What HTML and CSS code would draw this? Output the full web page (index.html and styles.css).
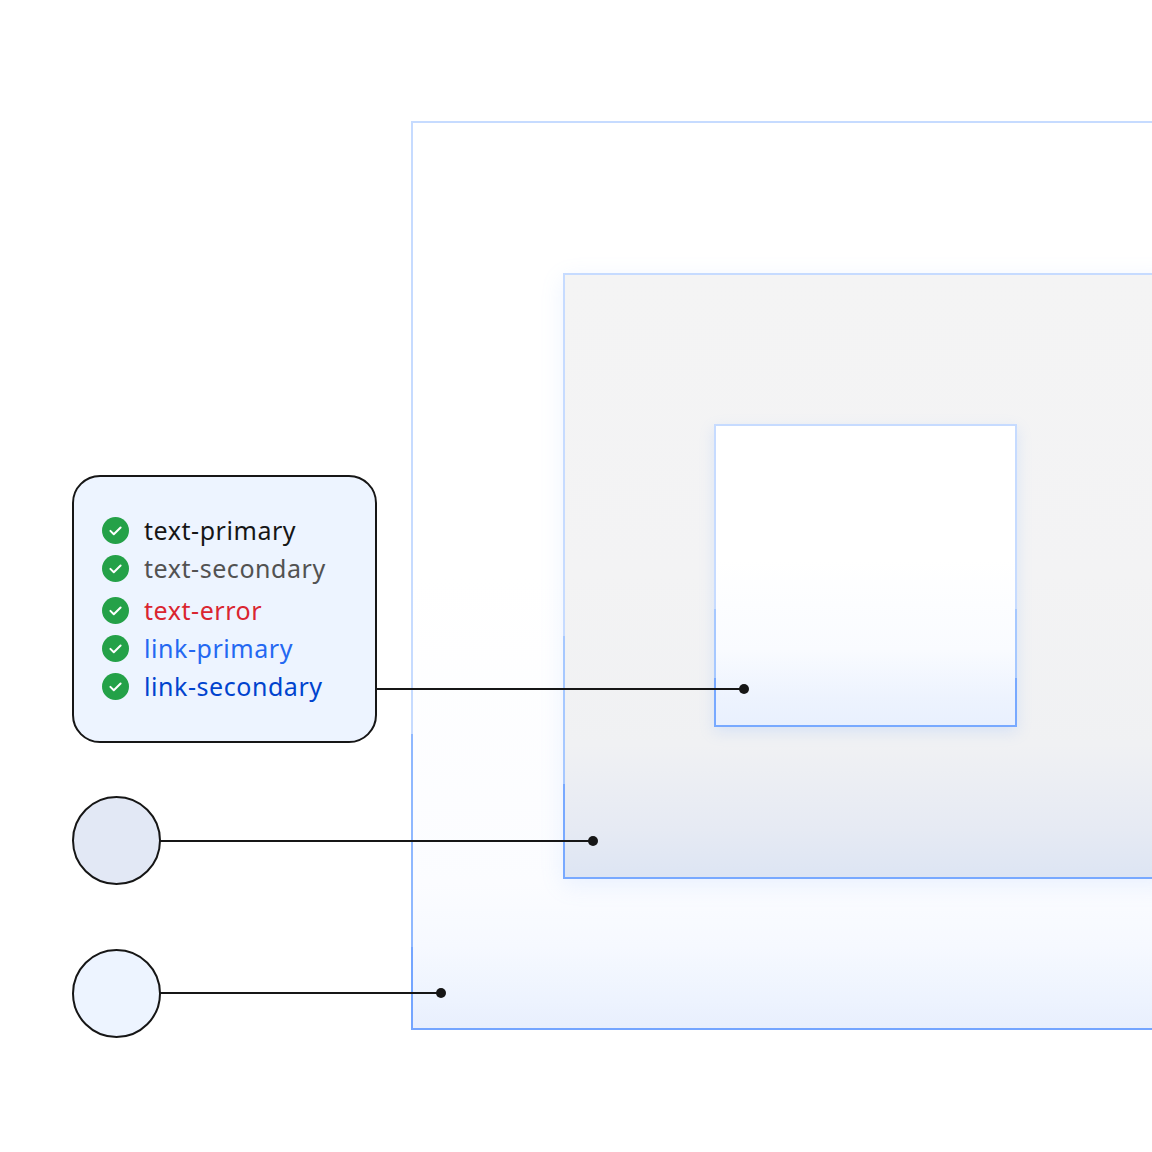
FILE: index.html
```html
<!DOCTYPE html>
<html lang="en">
<head>
<meta charset="utf-8">
<title>Layers and tokens</title>
<link rel="stylesheet" href="styles.css">
</head>
<body>
<main class="canvas">
  <div class="layer layer-outer"></div>
  <div class="layer layer-mid"></div>
  <div class="layer layer-inner"></div>

  <div class="connector connector-card"></div>
  <div class="connector connector-mid"></div>
  <div class="connector connector-outer"></div>

  <ul class="card">
    <li class="token c-primary"><svg class="check" viewBox="0 0 27 27"><circle cx="13.5" cy="13.5" r="13.5"/><path d="M8.4 13.9l3.4 3.3 6.8-6.7"/></svg><span>text-primary</span></li>
    <li class="token c-secondary"><svg class="check" viewBox="0 0 27 27"><circle cx="13.5" cy="13.5" r="13.5"/><path d="M8.4 13.9l3.4 3.3 6.8-6.7"/></svg><span>text-secondary</span></li>
    <li class="token c-error"><svg class="check" viewBox="0 0 27 27"><circle cx="13.5" cy="13.5" r="13.5"/><path d="M8.4 13.9l3.4 3.3 6.8-6.7"/></svg><span>text-error</span></li>
    <li class="token c-link"><svg class="check" viewBox="0 0 27 27"><circle cx="13.5" cy="13.5" r="13.5"/><path d="M8.4 13.9l3.4 3.3 6.8-6.7"/></svg><span>link-primary</span></li>
    <li class="token c-link2"><svg class="check" viewBox="0 0 27 27"><circle cx="13.5" cy="13.5" r="13.5"/><path d="M8.4 13.9l3.4 3.3 6.8-6.7"/></svg><span>link-secondary</span></li>
  </ul>

  <div class="swatch swatch-mid"></div>
  <div class="swatch swatch-outer"></div>
</main>
</body>
</html>
```
FILE: styles.css
```css
* { box-sizing: border-box; }
html, body { margin: 0; padding: 0; background: #fff; }
.canvas {
  position: relative;
  width: 1152px;
  height: 1152px;
  overflow: hidden;
  background: #fff;
  font-family: "Noto Sans", "Open Sans", sans-serif;
}

/* nested layers */
.layer {
  position: absolute;
  border: 2px solid;
}
.layer-outer {
  left: 411px; top: 121px; width: 910px; height: 909px;
  background: linear-gradient(to bottom, #fff 0%, #fff 50%, #fbfcff 84%, #f6f9ff 91%, #edf3fe 97%, #e8effd 100%);
  border-image: linear-gradient(to bottom, #c6dbff 0%, #c6dbff 67.5%, #8fb8ff 67.5%, #8fb8ff 91%, #74a5ff 91%, #74a5ff 100%) 1;
}
.layer-mid {
  left: 563px; top: 273px; width: 606px; height: 606px;
  background: linear-gradient(to bottom, #f4f4f4 0%, #f3f3f4 50%, #f0f1f3 78%, #e6eaf3 92%, #dde5f3 100%);
  box-shadow: 0 6px 22px rgba(120, 169, 255, 0.14);
  border-image: linear-gradient(to bottom, #c6dbff 0%, #c6dbff 60%, #a6c8ff 60%, #a6c8ff 84.5%, #78a9ff 84.5%, #78a9ff 100%) 1;
}
.layer-inner {
  left: 714px; top: 424px; width: 303px; height: 303px;
  background: linear-gradient(to bottom, #fff 0%, #fff 45%, #f9fbff 75%, #edf3fe 91%, #e9f0fe 100%);
  box-shadow: 0 5px 14px rgba(120, 169, 255, 0.2);
  border-image: linear-gradient(to bottom, #c6dbff 0%, #c6dbff 61%, #a6c8ff 61%, #a6c8ff 84%, #78a9ff 84%, #78a9ff 100%) 1;
}

/* leader lines */
.connector {
  position: absolute;
  height: 2px;
  background: #161616;
}
.connector::after {
  content: "";
  position: absolute;
  right: -5px;
  top: -4px;
  width: 10px;
  height: 10px;
  border-radius: 50%;
  background: #161616;
}
.connector-card { left: 376px; top: 688px; width: 368px; }
.connector-mid { left: 160px; top: 840px; width: 433px; }
.connector-outer { left: 160px; top: 992px; width: 281px; }

/* token card */
.card {
  position: absolute;
  left: 72px;
  top: 475px;
  width: 305px;
  height: 268px;
  margin: 0;
  padding: 34px 0 0 28px;
  list-style: none;
  background: #edf4ff;
  border: 2px solid #161616;
  border-radius: 28px;
  display: flex;
  flex-direction: column;
}
.token {
  display: flex;
  align-items: center;
  gap: 15px;
  height: 38px;
  font-size: 25px;
  letter-spacing: 0.55px;
  white-space: nowrap;
}
.c-primary { color: #161616; }
.c-secondary { color: #525252; }
.c-error { color: #da2530; padding-top: 4px; height: 42px; }
.c-link { color: #2468f2; }
.c-link2 { color: #0043ce; }
.check { width: 27px; height: 27px; flex: none; }
.check circle { fill: #24a148; }
.check path { fill: none; stroke: #fff; stroke-width: 2; stroke-linecap: round; stroke-linejoin: round; }

/* swatches */
.swatch {
  position: absolute;
  left: 72px;
  width: 89px;
  height: 89px;
  border: 2px solid #161616;
  border-radius: 50%;
}
.swatch-mid { top: 796px; background: #e2e8f5; }
.swatch-outer { top: 949px; background: #edf4ff; }
```
